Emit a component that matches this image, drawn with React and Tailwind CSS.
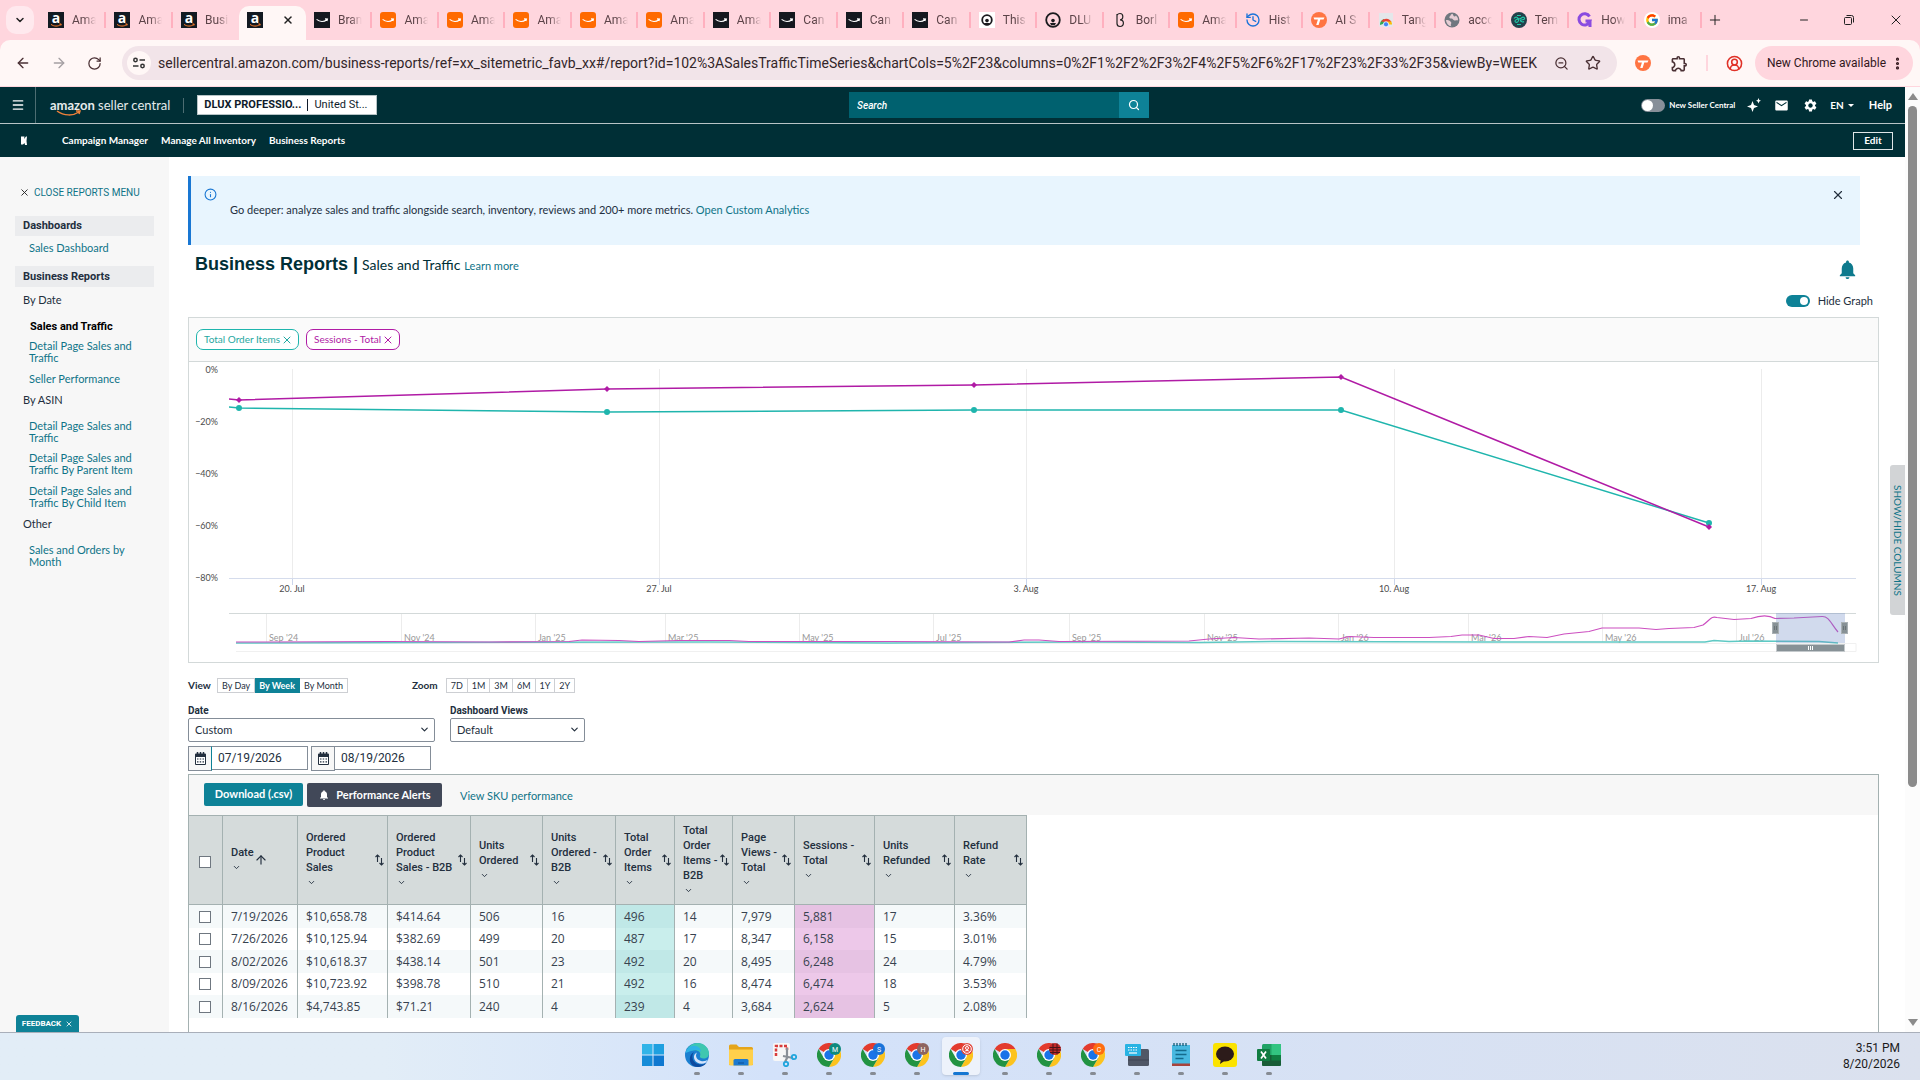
import React from "react";
import {
  ArrowLeft, ArrowRight, RotateCw, Star, X, Plus, Minus, Menu, ChevronDown, Info,
  ZoomOut, CircleUserRound, MoreVertical, Search, ArrowUp, History,
} from "lucide-react";
import { FcGoogle } from "react-icons/fc";
import { MdNotifications, MdSettings, MdMail, MdOutlineExtension } from "react-icons/md";

const BODY = "font-['Lato','Liberation_Sans',sans-serif]";
const UI = "font-['Roboto','Liberation_Sans',sans-serif]";

/* ---------- favicons ---------- */

function AmazonA() {
  return (
    <svg viewBox="0 0 16 16" className="size-4 shrink-0">
      <rect width="16" height="16" fill="#131a22" />
      <text x="8" y="11" textAnchor="middle" fontSize="14" fontWeight="700" fill="#fff" fontFamily="Open Sans, sans-serif">a</text>
      <path d="M3 12.4c3 2.2 7 2.2 9.6.2M11.4 12h1.8l-.4 1.6" fill="none" stroke="#ff7f2a" strokeWidth="1" />
    </svg>
  );
}
function Smile({ bg, r }) {
  return (
    <svg viewBox="0 0 16 16" className="size-4 shrink-0">
      <rect width="16" height="16" rx={r} fill={bg} />
      <path d="M2.6 7.4c3.2 2.6 7.4 2.7 10.2.3M11 6.9l2.4.1-.5 2" fill="none" stroke="#fff" strokeWidth="1.2" />
    </svg>
  );
}
function Ring({ box }) {
  return (
    <svg viewBox="0 0 16 16" className="size-4 shrink-0">
      {box && <rect width="16" height="16" fill="#fff" />}
      <circle cx="8" cy="8" r={box ? 4.8 : 6.8} fill="none" stroke="#1b1b1f" strokeWidth="1.8" />
      <path d="M5 11h6l-1.2 2.2H6.2z" fill="#1b1b1f" />
      <circle cx="8" cy="8.600" r="1.800" fill="#1b1b1f" />
    </svg>
  );
}
function BMark() {
  return (
    <svg viewBox="0 0 16 16" className="size-4 shrink-0" fill="none" stroke="#222" strokeWidth="1.2">
      <path d="M5 2v9.5c0 2 1.3 3 3 3s3.4-1.2 3.4-3.4S10 7.8 8 7.800M5 3.2C5.8 2 6.8 1.5 8 1.5c1.6 0 2.8 1 2.8 3S9.6 7.8 8 7.8" />
    </svg>
  );
}
function TMark() {
  return (
    <svg viewBox="0 0 16 16" className="size-4 shrink-0">
      <circle cx="8" cy="8" r="8" fill="#ff7442" />
      <path d="M2.5 5.5h11l-1 2H9.3L7.6 13H5.2l1.7-5.5H3.3z" fill="#fff" />
    </svg>
  );
}
function StoreMark() {
  return (
    <svg viewBox="0 0 16 16" className="size-4 shrink-0">
      <path d="M1 1h14v12.5a1.5 1.5 0 0 1-1.5 1.5h-11A1.5 1.5 0 0 1 1 13.500z" fill="#e4e7ea" />
      <path d="M2 13a6 6 0 0 1 4-6l2 4z" fill="#34a853" />
      <path d="M3 9.5a6 6 0 0 1 10.5.5H8z" fill="#ea4335" />
      <path d="M14 12.5a6 6 0 0 0-.8-3H9l1 3z" fill="#fbbc05" />
      <circle cx="8" cy="12.3" r="2.6" fill="#4285f4" stroke="#fff" strokeWidth=".8" />
    </svg>
  );
}
function GlobeMark() {
  return (
    <svg viewBox="0 0 16 16" className="size-4 shrink-0">
      <circle cx="8" cy="8" r="7.500" fill="#70777f" />
      <path d="M8.500 1.800c-2 .2-1.500 1.800-2.800 2.600C4.500 5.200 6 6.500 7.500 6.500S9 8.200 10.500 8.500s2.500-.5 3.500 0a6 6 0 0 0-2-5C11 5 10 4.500 9.500 3.800zM2 8c1.500 0 3.500.3 4.500 1.500S7.500 11 7 12s-.2 1.500.5 2.200A6.300 6.300 0 0 1 2 8z" fill="#e6cdd4" />
    </svg>
  );
}
function TealMark() {
  return (
    <svg viewBox="0 0 16 16" className="size-4 shrink-0">
      <circle cx="8" cy="8" r="8" fill="#23404b" />
      <path d="M3 6.5c2-2.5 4-1 4.5 1S6 11 4.5 10 5 7 8 7s3-3 5-1.5-1 2.5-3 2.5 1 3 3 1.5M6 12.500h4M6 3.500h4" fill="none" stroke="#1fc9a8" strokeWidth="1.1" />
    </svg>
  );
}
function GPurple() {
  return (
    <svg viewBox="0 0 16 16" className="size-4 shrink-0">
      <path d="M12.5 4.6A5.6 5.6 0 1 0 13 9H8.500M13 8.800V15" fill="none" stroke="#8a4be0" strokeWidth="3" />
    </svg>
  );
}
function GoogleMark() {
  return <span className="flex size-4 shrink-0 items-center justify-center rounded-full bg-white"><FcGoogle className="size-[14px]" /></span>;
}

const black = <Smile bg="#15181f" r={0} />;
const orange = <Smile bg="#ff6a00" r={3} />;
const TABS = [
  [<AmazonA />, "Ama"], [<AmazonA />, "Ama"], [<AmazonA />, "Busi"], [<AmazonA />, null],
  [black, "Bran"], [orange, "Ama"], [orange, "Ama"], [orange, "Ama"], [orange, "Ama"], [orange, "Ama"],
  [black, "Ama"], [black, "Can"], [black, "Can"], [black, "Can"], [<Ring box />, "This"], [<Ring />, "DLU"],
  [<BMark />, "Borl"], [orange, "Ama"], [<History className="size-4 shrink-0 text-[#1a73d9]" />, "Hist"],
  [<TMark />, "AI S"], [<StoreMark />, "Tang"], [<GlobeMark />, "acco"], [<TealMark />, "Tem"],
  [<GPurple />, "How"], [<GoogleMark />, "ima"],
];

/* ---------- browser chrome ---------- */

function TabStrip() {
  return (
    <div className="flex h-10 shrink-0 bg-[#ffd6de]">
      <div className="flex w-10 shrink-0 items-center pl-[6px]">
        <button aria-label="Search tabs" className="flex h-7 w-7 items-center justify-center rounded-[10px] bg-[#ffe9ee] text-[#222]">
          <ChevronDown className="size-3" strokeWidth={3} />
        </button>
      </div>
      <div className="flex min-w-0 flex-1">
        {TABS.map(([icon, label], i) =>
          label === null ? (
            <div key={i} className="mt-[6px] flex min-w-0 shrink grow basis-16 items-center justify-between rounded-t-[10px] bg-[#fff7f6] pr-3 pb-[6px] pl-2">
              {icon}
              <button aria-label="Close tab"><X className="size-3 text-[#222]" strokeWidth={3} /></button>
            </div>
          ) : (
            <div key={i} className="flex min-w-0 shrink grow basis-16 items-center pl-2">
              {icon}
              <span className={`${UI} ml-2 text-xs whitespace-nowrap text-[#5c4348] [mask-image:linear-gradient(to_right,#000_12px,transparent_24px)]`}>{label}</span>
              <span className={i === 2 ? "hidden" : "ml-auto h-4 w-[2px] shrink-0 bg-[#ffb0bf]"} />
            </div>
          )
        )}
      </div>
      <div className="flex w-[218px] shrink-0 items-center justify-between pr-4 pl-[5px] text-[#222]">
        <button aria-label="New tab"><Plus className="size-4" strokeWidth={1.5} /></button>
        <div className="flex items-center gap-[33px]">
          <button aria-label="Minimize"><Minus className="size-3" strokeWidth={2} /></button>
          <button aria-label="Restore">
            <svg viewBox="0 0 12 12" className="size-3" fill="none" stroke="currentColor">
              <rect x="1.5" y="3.5" width="7" height="7" rx="1" /><path d="M3.5 1.5h5a2 2 0 0 1 2 2v5" />
            </svg>
          </button>
          <button aria-label="Close"><X className="size-4" strokeWidth={1.5} /></button>
        </div>
      </div>
    </div>
  );
}

function Toolbar() {
  return (
    <div className="bg-[#ffd6de]">
      <div className={`${UI} flex h-[46px] items-center rounded-t-[10px] bg-[#fff7f6] pr-[7px] pl-[15px] text-[#4a3034]`}>
        <button aria-label="Back"><ArrowLeft className="size-4" /></button>
        <button aria-label="Forward" className="ml-5 text-[#a5a0a3]"><ArrowRight className="size-4" /></button>
        <button aria-label="Reload" className="ml-5"><RotateCw className="size-[15px]" /></button>
        <div className="ml-5 flex h-[34px] min-w-0 flex-1 items-center rounded-full bg-[#f2e4e9] pr-4 pl-[5px]">
          <span className="flex size-6 shrink-0 items-center justify-center rounded-full bg-[#fff7f6]">
            <svg viewBox="0 0 14 14" className="size-[14px]" fill="none" stroke="#333" strokeWidth="1.5">
              <circle cx="3.5" cy="4" r="1.7" /><path d="M7.5 4h5.5M1 10h5.5" /><circle cx="10.5" cy="10" r="1.7" />
            </svg>
          </span>
          <input
            aria-label="Address"
            readOnly
            className="ml-[7px] min-w-0 flex-1 bg-transparent text-sm text-[#33262a] outline-none"
            value="sellercentral.amazon.com/business-reports/ref=xx_sitemetric_favb_xx#/report?id=102%3ASalesTrafficTimeSeries&chartCols=5%2F23&columns=0%2F1%2F2%2F3%2F4%2F5%2F6%2F17%2F23%2F33%2F35&viewBy=WEEK"
          />
          <button aria-label="Zoom"><ZoomOut className="size-[15px]" /></button>
          <button aria-label="Bookmark" className="ml-4"><Star className="size-4" /></button>
        </div>
        <span className="ml-[18px]"><TMark /></span>
        <button aria-label="Extensions" className="ml-[19px]"><MdOutlineExtension className="size-[19px]" /></button>
        <span className="ml-[17px] h-4 w-[2px] bg-[#ffd6de]" />
        <button aria-label="Profile" className="ml-[18px] text-[#e03127]"><CircleUserRound className="size-[17px]" strokeWidth={2.2} /></button>
        <button className="ml-[12px] flex h-[34px] items-center rounded-full bg-[#ffd6de] pr-2 pl-3 text-xs text-[#33161c]">
          New Chrome available
          <MoreVertical className="ml-1 size-[15px]" strokeWidth={3} />
        </button>
      </div>
      <div className="h-px bg-[#ffd6de]" />
    </div>
  );
}

/* ---------- seller central header ---------- */

function Header() {
  return (
    <header className={`${BODY} shrink-0 bg-[#002f36] text-white`}>
      <div className="flex h-9 items-center">
        <div className="flex min-w-0 flex-8 items-center self-stretch">
          <button aria-label="Menu" className="flex w-9 items-center self-stretch border-r border-[#4d6d72] pl-[11px]">
            <Menu className="size-[14px]" strokeWidth={2.4} />
          </button>
          <a href="#home" className="relative ml-[14px] text-[13px] leading-4 whitespace-nowrap text-[#e5ebec]">
            <b>amazon</b> seller central
            <svg viewBox="0 0 26 6" className="absolute top-[13px] left-[6px] h-[6px] w-[26px]" fill="none" stroke="#f0813a" strokeWidth="1.5">
              <path d="M1 1c7 5 16 5 22 1M20 1l4 0-1 3" />
            </svg>
          </a>
          <span className="mx-[13px] h-[15px] w-px bg-[#4d6d72]" />
          <button className={`${UI} flex h-5 w-[180px] items-center border border-[#b7c4c6] bg-white px-[6px] text-[11px] text-[#0f1b2b]`}>
            <b>DLUX PROFESSIO...</b>
            <span className="mx-[6px] h-3 w-px bg-[#0f1b2b]" />
            <span>United St...</span>
          </button>
        </div>
        <form className="flex h-[26px] w-[300px] shrink-0">
          <input aria-label="Search" placeholder="Search" className={`${UI} min-w-0 flex-1 bg-[#00616f] px-2 text-[10px] font-medium italic placeholder:text-white`} />
          <button type="button" aria-label="Go" className="flex w-[30px] items-center justify-center bg-[#0e8297]"><Search className="size-3" strokeWidth={2.4} /></button>
        </form>
        <div className="flex min-w-0 flex-7 items-center justify-end pr-[13px] font-bold">
          <label className="flex items-center gap-1 text-[8px] whitespace-nowrap">
            <input type="checkbox" role="switch" className="h-[13px] w-6 appearance-none rounded-full bg-[#878f99] before:block before:size-[11px] before:translate-y-px before:translate-x-px before:rounded-full before:bg-white" />
            New Seller Central
          </label>
          <svg viewBox="0 0 14 14" className="ml-3 size-[14px]" fill="#fff">
            <path d="M5.5 3l1.5 4 4 1.5-4 1.5-1.5 4L4 10 0 8.500 4 7z" /><path d="M11.500 0l.8 2 1.7.8-1.7.8-.8 2-.8-2L9 2.8l1.7-.8z" />
          </svg>
          <MdMail className="ml-[13px] size-[15px]" />
          <MdSettings className="ml-[14px] size-[15px]" />
          <button className="ml-3 flex items-center text-[10px]">EN<span className="ml-1 border-x-[3px] border-t-[3px] border-x-transparent border-t-white" /></button>
          <a href="#help" className="ml-[15px] text-[11px]">Help</a>
        </div>
      </div>
      <div className="h-px bg-[#b7c4c6]" />
      <nav className="flex h-[33px] items-center pr-[12px] pl-5 text-[10px] font-bold">
        <svg viewBox="0 0 8 9" className="mb-px h-[9px] w-2" fill="#fff"><path d="M1 .5h3.500L4 3l2-2.500h1L6.500 5 7 9H5L4.500 7 3 8.500H1z" /></svg>
        <a href="#campaign" className="ml-[34px]">Campaign Manager</a>
        <a href="#inventory" className="ml-[13px]">Manage All Inventory</a>
        <a href="#reports" className="ml-[13px]">Business Reports</a>
        <button className="ml-auto h-[18px] w-10 border border-[#dfe6e7]">Edit</button>
      </nav>
    </header>
  );
}

/* ---------- sidebar ---------- */

const SIDE = [
  ["band", "Dashboards", "mt-[16px] h-5"],
  ["link", "Sales Dashboard", "mt-[6px]"],
  ["band", "Business Reports", "mt-3 h-[21px]"],
  ["group", "By Date", "mt-[7px]"],
  ["active", "Sales and Traffic", "mt-[15px]"],
  ["link", "Detail Page Sales and Traffic", "mt-[7px]"],
  ["link", "Seller Performance", "mt-[9px]"],
  ["group", "By ASIN", "mt-[9px]"],
  ["link", "Detail Page Sales and Traffic", "mt-[14px]"],
  ["link", "Detail Page Sales and Traffic By Parent Item", "mt-2"],
  ["link", "Detail Page Sales and Traffic By Child Item", "mt-[9px]"],
  ["group", "Other", "mt-[9px]"],
  ["link", "Sales and Orders by Month", "mt-[14px]"],
];
const SIDE_STYLE = {
  band: "flex items-center bg-[#ebecee] pl-2 font-['Roboto'] font-bold text-[#232f3e]",
  link: "mr-3 ml-[14px] block text-[#0f7488]",
  active: "mr-3 ml-[15px] block font-['Roboto'] font-bold text-black",
  group: "ml-2 text-[#232f3e]",
};

function Sidebar() {
  return (
    <aside className={`${BODY} relative w-[169px] shrink-0 bg-[#f7f7f7] px-[15px] pt-[28px] text-[11px] leading-3`}>
      <button className={`${UI} flex h-[15px] items-center gap-1 pl-[4px] text-[10px] whitespace-nowrap text-[#0f7488]`}>
        <X className="size-[11px] text-[#222]" strokeWidth={2} />
        CLOSE REPORTS MENU
      </button>
      {SIDE.map(([kind, label, gap], i) =>
        kind === "link" || kind === "active" ? (
          <a key={i} href="#report" className={`${SIDE_STYLE[kind]} ${gap}`}>{label}</a>
        ) : (
          <div key={i} className={`${SIDE_STYLE[kind]} ${gap}`}>{label}</div>
        )
      )}
      <button className={`${UI} absolute bottom-0 left-4 flex h-[17px] w-[63px] items-center justify-center gap-1 rounded-t-[3px] bg-[#0e8297] text-[8px] font-bold whitespace-nowrap text-white`}>
        FEEDBACK <X className="size-2" strokeWidth={2.4} />
      </button>
    </aside>
  );
}

/* ---------- chart ---------- */

const PX = [50, 418, 785, 1152, 1520];
const MAG = [38, 27, 23, 15, 165];
const TEAL = [46, 50, 48, 48, 161];
const WEEKS = [[103, "20. Jul"], [470, "27. Jul"], [837, "3. Aug"], [1205, "10. Aug"], [1572, "17. Aug"]];
const MONTHS = [[77, "Sep '24"], [212, "Nov '24"], [346, "Jan '25"], [476, "Mar '25"], [610, "May '25"], [744, "Jul '25"], [880, "Sep '25"], [1015, "Nov '25"], [1149, "Jan '26"], [1279, "Mar '26"], [1413, "May '26"], [1547, "Jul '26"]];

function Chart() {
  const pts = (ys) => ys.map((y, i) => `${PX[i]},${y}`).join(" ");
  return (
    <svg viewBox="0 0 1689 300" className="block h-auto w-full" fontFamily="Lato, sans-serif" fontSize="9">
      {[0, 20, 40, 60, 80].map((v) => (
        <text key={v} x="29" y={11 + v * 2.6} textAnchor="end" fill="#4c4c4c">{v ? `−${v}%` : "0%"}</text>
      ))}
      {WEEKS.map(([x, t]) => (
        <g key={t}>
          <path d={`M${x + 0.5} 7V216`} stroke="#ececec" />
          <path d={`M${x + 0.5} 216V223`} stroke="#ccd6eb" />
          <text x={x} y="230" textAnchor="middle" fill="#4c4c4c">{t}</text>
        </g>
      ))}
      <path d="M40 216.5H1667" stroke="#d5dcec" />
      <polyline points={`40,45 ${pts(TEAL)}`} fill="none" stroke="#1fb5ad" strokeWidth="1.5" />
      <polyline points={`40,37 ${pts(MAG)}`} fill="none" stroke="#b01ba5" strokeWidth="1.5" />
      {PX.map((x, i) => <circle key={x} cx={x} cy={TEAL[i]} r="3" fill="#1fb5ad" />)}
      {PX.map((x, i) => <path key={x} d={`M${x} ${MAG[i] - 3}l3 3-3 3-3-3z`} fill="#b01ba5" />)}

      <path d="M40 251.5H1667" stroke="#d3d9d9" />
      {MONTHS.map(([x, t]) => (
        <g key={t}>
          <path d={`M${x + 0.5} 252V280`} stroke="#ececec" />
          <text x={x + 3} y="279" fill="#999">{t}</text>
        </g>
      ))}
      <path d="M47 281.5H1667V289.5H47" fill="none" stroke="#f0f0f0" />
      <path d="M47 281C200 280 400 281 520 280L700 281 900 280 1010 280.5 1090 279.5 1300 280 1420 280 1516 280 1525 278.5 1540 279.5 1560 279 1630 279.5 1649 281" fill="none" stroke="#5fc9c4" strokeWidth="1.5" />
      <path d="M47 280H76L200 279.5 300 280 380 279.5 393 278 430 278.5 450 279.5 490 278.5 540 278.5 560 279.5 700 279.5 820 280 835 278 850 278 870 279.5 1000 279 1020 277 1045 275.5 1070 277 1120 276 1150 277 1160 274.5 1185 275.5 1240 275.5 1262 274.5 1273 273 1290 273 1305 276.5 1325 276.5 1340 274.5 1358 275.5 1375 272 1400 269.5 1413 266 1450 266 1467 267.5 1480 266.5 1505 265.5 1514 263C1522 257 1522 254 1528 255.5L1545 257.5 1562 256.5C1572 253 1580 253 1586 256.5L1605 256 1633 254.5C1640 254 1642 262 1649 270" fill="none" stroke="#cc4fc0" strokeWidth="1.2" />
      <rect x="1587" y="251" width="69" height="30" fill="#6685c2" fillOpacity=".3" />
      <rect x="1587.5" y="282.5" width="68" height="7" fill="#879196" stroke="#c4c9cc" />
      <path d="M1619.5 284v4M1621.5 284v4M1623.5 284v4" stroke="#fff" />
      {[1583, 1652].map((x) => (
        <g key={x}>
          <rect x={x + 0.5} y="260.5" width="6" height="11" fill="#879196" stroke="#a9b0b4" />
          <path d={`M${x + 2.5} 264v4M${x + 4.5} 264v4`} stroke="#6a7276" />
        </g>
      ))}
    </svg>
  );
}

function Chip({ label, cls }) {
  return (
    <button className={`flex h-[21px] items-center rounded-[7px] border bg-white pr-[5px] pl-[7px] text-[10px] ${cls}`}>
      {label}<X className="ml-px size-3" strokeWidth={2} />
    </button>
  );
}

/* ---------- controls ---------- */

function Segmented({ items, active, pad }) {
  return (
    <div className="flex h-[15px] text-[9px] text-[#232f3e]">
      {items.map((t, i) => (
        <button key={t} className={`${pad} border-y border-r leading-3 whitespace-nowrap first:border-l ${i === active ? "border-[#0e8297] bg-[#0e8297] font-bold text-white" : "border-[#cdcfd3] bg-white"}`}>{t}</button>
      ))}
    </div>
  );
}

function Select({ label, value, width }) {
  return (
    <div className={width}>
      <label className="block font-['Roboto'] text-[10px] leading-[15px] font-bold text-[#232f3e]" htmlFor={label}>{label}</label>
      <div className="relative">
        <select id={label} className="h-6 w-full appearance-none rounded-[2px] border border-[#848d98] bg-white px-[6px] text-[11px] text-[#232f3e]">
          <option>{value}</option>
        </select>
        <ChevronDown className="pointer-events-none absolute top-[6px] right-[5px] size-[11px] text-[#232f3e]" strokeWidth={2.6} />
      </div>
    </div>
  );
}

function DateBox({ label, value, iconBorder }) {
  return (
    <div className="flex items-start">
      <span className={`flex h-[25px] w-6 items-center justify-center border bg-[#f7f7f7] ${iconBorder}`}>
        <svg viewBox="0 0 13 13" className="size-[13px]">
          <path d="M1 2.5a1 1 0 0 1 1-1h9a1 1 0 0 1 1 1V12a1 1 0 0 1-1 1H2a1 1 0 0 1-1-1z" fill="#232f3e" />
          <path d="M3.5 0v3M6.5 0v3M9.5 0v3" stroke="#232f3e" strokeWidth="1.5" />
          <path d="M2 5h9v7H2z" fill="#fff" />
          <path d="M3 7h1.500M5.700 7h1.500M8.500 7H10M3 9.800h1.500M5.700 9.800h1.500M8.500 9.800H10" stroke="#232f3e" strokeWidth="1.200" />
        </svg>
      </span>
      <input aria-label={label} defaultValue={value} className={`${UI} h-6 w-24 border border-l-0 border-[#848d98] bg-white px-[6px] text-xs text-[#232f3e]`} />
    </div>
  );
}

/* ---------- table ---------- */

const COLS = [
  ["Ordered\nProduct\nSales", "w-[90px]"], ["Ordered\nProduct\nSales - B2B", "w-[83px]"], ["Units\nOrdered", "w-[72px]"],
  ["Units\nOrdered -\nB2B", "w-[73px]"], ["Total\nOrder\nItems", "w-[59px]"], ["Total\nOrder\nItems -\nB2B", "w-[58px]"],
  ["Page\nViews -\nTotal", "w-[62px]"], ["Sessions -\nTotal", "w-20"], ["Units\nRefunded", "w-20"], ["Refund\nRate", "w-[72px]"],
];
const ROWS = [
  ["7/19/2026", "$10,658.78", "$414.64", "506", "16", "496", "14", "7,979", "5,881", "17", "3.36%"],
  ["7/26/2026", "$10,125.94", "$382.69", "499", "20", "487", "17", "8,347", "6,158", "15", "3.01%"],
  ["8/02/2026", "$10,618.37", "$438.14", "501", "23", "492", "20", "8,495", "6,248", "24", "4.79%"],
  ["8/09/2026", "$10,723.92", "$398.78", "510", "21", "492", "16", "8,474", "6,474", "18", "3.53%"],
  ["8/16/2026", "$4,743.85", "$71.21", "240", "4", "239", "4", "3,684", "2,624", "5", "2.08%"],
];

function SortIcon() {
  return (
    <svg viewBox="0 0 9 12" className="mr-[3px] h-3 w-[9px] shrink-0" fill="none" stroke="#232f3e" strokeWidth="1.1">
      <path d="M2.5 8V1M.5 3l2-2 2 2M6.5 4v7M4.5 9l2 2 2-2" />
    </svg>
  );
}
function Tick({ label }) {
  return <input type="checkbox" aria-label={label} className="block size-3 appearance-none border border-[#6f7780] bg-white" />;
}
function cellTone(c, r) {
  if (c === 5) return r % 2 ? "bg-[#c9eeec]" : "bg-[#c0e8e7]";
  if (c === 8) return r % 2 ? "bg-[#edc8e9]" : "bg-[#e6c2e3]";
  return "";
}

function ReportTable() {
  const line = "border-r border-[#a4b1b1]";
  return (
    <table className="w-[837px] table-fixed border-separate border-spacing-0 text-left">
      <thead className={`${UI} text-[11px] leading-[15px] text-[#232f3e]`}>
        <tr className="h-[90px] bg-[#d5dbdb] *:border-y *:border-y-[#a4b1b1] *:p-0">
          <th className={`w-[34px] ${line}`}><div className="pt-1 pl-[10px]"><Tick label="Select all" /></div></th>
          <th className={`w-[75px] ${line}`}>
            <div className="flex items-center pl-2 font-medium">
              <div>Date<ChevronDown className="my-[3px] ml-px size-[9px]" strokeWidth={2.4} /></div>
              <ArrowUp className="size-[14px]" strokeWidth={2} />
            </div>
          </th>
          {COLS.map(([t, w]) => (
            <th key={t} className={`${w} ${line}`}>
              <div className="flex items-center justify-between pl-2 font-medium">
                <div className="whitespace-pre">{t}<ChevronDown className="my-[3px] ml-px size-[9px]" strokeWidth={2.4} /></div>
                <SortIcon />
              </div>
            </th>
          ))}
        </tr>
      </thead>
      <tbody className="font-['Open_Sans','Noto_Sans',sans-serif] text-xs leading-4 text-[#37424f]">
        {ROWS.map((row, r) => (
          <tr key={r} className={r % 2 ? "h-[22px] bg-white" : "h-[23px] bg-[#f5f9fa]"}>
            <td className={`p-0 ${line}`}><div className="pl-[10px]"><Tick label={row[0]} /></div></td>
            {row.map((v, c) => <td key={c} className={`py-0 pr-0 pl-2 ${line} ${cellTone(c, r)}`}>{v}</td>)}
          </tr>
        ))}
      </tbody>
    </table>
  );
}

/* ---------- main ---------- */

function Main() {
  return (
    <main className={`${BODY} relative flex min-w-0 flex-1 flex-col overflow-hidden bg-white pt-[19px] pr-[26px] pl-[19px] text-[11px] text-[#232f3e]`}>
      <div className="mr-[19px] flex h-[69px] shrink-0 border-l-[3px] border-[#1977d3] bg-[#e8f5fe]">
        <Info className="mt-3 ml-[13px] size-[13px] text-[#1977d3]" strokeWidth={2} />
        <p className="mt-7 ml-[13px] leading-3">
          Go deeper: analyze sales and traffic alongside search, inventory, reviews and 200+ more metrics. <a href="#analytics" className="text-[#0f7488]">Open Custom Analytics</a>
        </p>
        <button aria-label="Dismiss" className="mt-[12px] mr-[15px] ml-auto self-start"><X className="size-[14px]" strokeWidth={2} /></button>
      </div>

      <div className="flex h-[42px] shrink-0 items-start justify-between pr-5 pl-[7px]">
        <h1 className="mt-2 font-['Liberation_Sans',sans-serif] text-lg leading-[22px] font-bold text-[#002f36]">
          Business Reports | <span className="-ml-px font-['Lato'] text-sm font-normal">Sales and Traffic</span> <a href="#learn" className="-ml-px font-['Lato'] text-[11px] font-normal text-[#0f7488]">Learn more</a>
        </h1>
        <button aria-label="Alerts" className="mt-[13px] text-[#0e7a8d]"><MdNotifications className="size-[23px]" /></button>
      </div>

      <label className="mt-[7px] mr-[6px] flex h-[14px] shrink-0 items-center gap-2 self-end text-[11px]">
        <input type="checkbox" role="switch" defaultChecked className="h-3 w-6 appearance-none rounded-full bg-[#0e8297] before:ml-[14px] before:block before:size-2 before:translate-y-[2px] before:rounded-full before:bg-white" />
        Hide Graph
      </label>

      <section className="mt-[9px] shrink-0 border border-[#d3d9d9]">
        <div className="flex h-[44px] items-center gap-[7px] border-b border-[#d3d9d9] bg-[#fafafa] px-[7px]">
          <Chip label="Total Order Items" cls="border-[#1fb5ad] text-[#1fa8a1]" />
          <Chip label="Sessions - Total" cls="border-[#b01ba5] text-[#b01ba5]" />
        </div>
        <Chart />
      </section>

      <div className="mt-[15px] flex shrink-0 items-center">
        <b className="w-[29px] text-[10px]">View</b>
        <Segmented items={["By Day", "By Week", "By Month"]} active={1} pad="px-1" />
        <b className="mr-2 ml-[64px] text-[10px]">Zoom</b>
        <Segmented items={["7D", "1M", "3M", "6M", "1Y", "2Y"]} pad="px-1" />
      </div>
      <div className="mt-[10px] flex shrink-0 gap-[15px]">
        <Select label="Date" value="Custom" width="w-[247px]" />
        <Select label="Dashboard Views" value="Default" width="w-[135px]" />
      </div>
      <div className="mt-1 flex shrink-0 gap-[3px]">
        <DateBox label="Start date" value="07/19/2026" iconBorder="border-[#848d98] border-r-[#0e8297]" />
        <DateBox label="End date" value="08/19/2026" iconBorder="border-[#848d98]" />
      </div>

      <section className="mt-[3px] flex min-h-0 flex-1 flex-col border border-b-0 border-[#a4b1b1]">
        <div className="flex h-10 shrink-0 items-start bg-[#f7f7f7] pt-2 pl-[15px] font-bold text-white">
          <button className="h-[23px] w-[99px] rounded-[2px] bg-[#0e8297]">Download (.csv)</button>
          <button className="ml-1 flex h-6 w-[135px] items-center justify-center gap-[6px] rounded-[2px] bg-[#414858]">
            <MdNotifications className="size-3" />Performance Alerts
          </button>
          <a href="#sku" className="mt-[6px] ml-[18px] leading-[14px] font-normal text-[#0f7488]">View SKU performance</a>
        </div>
        <ReportTable />
      </section>

      <button className="absolute top-[308px] right-0 flex h-[150px] w-[15px] items-center justify-center rounded-l-[3px] bg-[#d2d4d6] text-[10px] text-[#0f7488] [writing-mode:vertical-rl]">SHOW/HIDE COLUMNS</button>
    </main>
  );
}

/* ---------- taskbar ---------- */

function ChromeIcon({ badge, letter }) {
  return (
    <svg viewBox="0 0 24 24" className="size-6">
      <path d="M12 12 1.6 6A12 12 0 0 1 22.4 6z" fill="#e33b2e" />
      <path d="M12 6h10.4A12 12 0 0 1 12 24l5.2-9z" fill="#fcc31e" />
      <path d="M17.2 15 12 24A12 12 0 0 1 1.6 6l5.2 9z" fill="#229342" />
      <circle cx="12" cy="12" r="6" fill="#fff" />
      <circle cx="12" cy="12" r="4.7" fill="#1a73e8" />
      {badge && <circle cx="18" cy="6" r="6" fill={badge} />}
      {letter && <text x="18" y="8.5" fontSize="7" textAnchor="middle" fill="#fff" fontFamily="Roboto, sans-serif">{letter}</text>}
      {badge === "#e34a3f" && <g fill="none" stroke="#fff" strokeWidth="1"><circle cx="18" cy="6" r="4.3" /><circle cx="18" cy="5" r="1.5" /><path d="M15.5 8.8c1-1.8 4-1.8 5 0" /></g>}
      {badge === "#c22a2a" && <path d="M12.5 4.500h11M12 7h12M13 9.500h10M16 .5v11M20 .5v11" stroke="#4a1518" strokeWidth="1" />}
    </svg>
  );
}
const svg = (children) => <svg viewBox="0 0 24 24" className="size-6">{children}</svg>;
const APPS = [
  ["Start", svg(<g><path d="M1 1h10.5v10.5H1z" fill="#31b4e8" /><path d="M12.5 1H23v10.5H12.500z" fill="#1fa0e0" /><path d="M1 12.5h10.5V23H1z" fill="#168cd8" /><path d="M12.5 12.5H23V23H12.500z" fill="#0f78d0" /></g>)],
  ["Edge", svg(<g><circle cx="12" cy="12" r="12" fill="#1b7fd0" /><path d="M1 9C3 3 8 0 12.5 0 19 0 24 5 24 10.5c0 3-2.5 5-5.5 5-2.5 0-4-1-3.5-2.2 1.5-4-2-6-5-6C6 7.3 2 9 1 9z" fill="#3fc7b0" /><path d="M.5 10C2 4 7 2 11 3c3 .8 5 3 5 6-1.5-2-4-2.5-6-2-5 1-8 2.5-9.5 3z" fill="#2fb2e6" /><path d="M9 9c-3 4-2 11 6 12.5 2.5.3 5-.5 6.5-1.5-3 4-9 5-13 3C3 20 4 11 9 9z" fill="#0c4aa0" /><path d="M12 9.5c-2 3-1 7 4 8.5 3 .8 6-.5 7-1.5l-2 3c-4 2.5-10 1-11.5-3S10 10.5 12 9.5z" fill="#d6e3fb" /></g>)],
  ["Explorer", svg(<g><path d="M0 3a1.5 1.5 0 0 1 1.5-1.5h6L10 4h12.5A1.5 1.5 0 0 1 24 5.5V22H0z" fill="#e5a51b" /><path d="M0 6.5h24V21a1.5 1.5 0 0 1-1.5 1.5h-21A1.5 1.5 0 0 1 0 21z" fill="#ffd04b" /><path d="M4.5 22.5v-5A1.5 1.5 0 0 1 6 16h12a1.5 1.5 0 0 1 1.5 1.5v5z" fill="#1d7ad0" /><path d="M9 20h6" stroke="#0d4f94" /></g>)],
  ["Snipping Tool", svg(<g><rect x="0" y="0" width="17" height="18" rx="2" fill="#f7f7f7" /><path d="M3 13V3h11v4" fill="none" stroke="#d83b3b" strokeWidth="2.5" strokeDasharray="3 1.5" /><path d="M14 5v10l-2 4M10 13l10 2" fill="none" stroke="#8a9097" strokeWidth="2.2" /><circle cx="21" cy="14" r="2.2" fill="none" stroke="#1fa5dd" strokeWidth="1.8" /><circle cx="13" cy="21" r="2.2" fill="none" stroke="#1fa5dd" strokeWidth="1.8" /></g>)],
  ["Chrome M", <ChromeIcon badge="#0f8a7e" letter="M" />],
  ["Chrome S", <ChromeIcon badge="#1a73d9" letter="S" />],
  ["Chrome H", <ChromeIcon badge="#8d6460" letter="H" />],
  ["Chrome profile", <ChromeIcon badge="#e34a3f" />],
  ["Chrome", <ChromeIcon />],
  ["Chrome work", <ChromeIcon badge="#c22a2a" />],
  ["Chrome C", <ChromeIcon badge="#ff6d10" letter="C" />],
  ["Keyboard", svg(<g><rect x="3" y="6" width="21" height="17" rx="1.5" fill="#505766" /><path d="M3 17h21" stroke="#3e4452" /><rect x="0" y="1" width="16" height="12" rx="1" fill="#29b3e3" /><path d="M3 4.5h10M3 7h10" stroke="#fff" strokeWidth="1.2" strokeDasharray="1.5 1" /><path d="M4 10h8" stroke="#fff" strokeWidth="1.2" /></g>)],
  ["Notepad", svg(<g><path d="M3 2h18v20H3z" fill="#48b8e0" /><path d="M3 20.5h18V23H3z" fill="#a8433c" /><path d="M5 0v3M8 0v3M11 0v3M14 0v3M17 0v3" stroke="#155a75" strokeWidth="1.3" /><path d="M6.5 7.5h11M6.5 11.5h11M6.5 15.5h8" stroke="#146a8c" strokeWidth="1.5" /></g>)],
  ["Talk", svg(<g><rect width="24" height="24" rx="3" fill="#fbe300" /><ellipse cx="12" cy="11" rx="9" ry="7.5" fill="#2c1b1a" /><path d="M8 16l-1 5 5-3.5z" fill="#2c1b1a" /></g>)],
  ["Excel", svg(<g><rect x="5" y="1" width="19" height="22" rx="1.5" fill="#21a366" /><path d="M5 12h19v9.5a1.5 1.5 0 0 1-1.5 1.5h-16A1.5 1.5 0 0 1 5 21.5z" fill="#185c37" /><path d="M14.5 1H24v11h-9.5z" fill="#33c481" /><path d="M14.5 12H24v5.5h-9.5z" fill="#107c41" /><rect x="0" y="6" width="13" height="12" rx="1" fill="#107c41" /><path d="M4 8.5l5 7M9 8.5l-5 7" stroke="#fff" strokeWidth="1.7" /></g>)],
];

function Taskbar() {
  return (
    <footer className="relative flex h-12 shrink-0 justify-center border-t border-[#a9afba] bg-linear-to-r from-[#e2edf7] from-20% via-[#d3e2fa] via-40% to-[#dbe1ee] pl-[2px]">
      {APPS.map(([name, icon], i) => (
        <button key={name} aria-label={name} className="flex w-11 justify-center pt-1">
          <span className={`flex h-[38px] w-[38px] flex-col items-center justify-between rounded-[4px] pt-[6px] ${name === "Chrome profile" ? "bg-[#edf2fb] shadow-sm" : ""}`}>
            {icon}
            <span className={i === 0 ? "hidden" : name === "Chrome profile" ? "h-[3px] w-4 rounded-full bg-[#1677d2]" : "h-[3px] w-[6px] rounded-full bg-[#868b93]"} />
          </span>
        </button>
      ))}
      <div className="absolute top-[7px] right-5 text-right font-['Roboto','Open_Sans',sans-serif] text-xs leading-4 text-[#1b1b1b]">
        <div>3:51 PM</div>
        <div>8/20/2026</div>
      </div>
    </footer>
  );
}

function PageScrollbar() {
  return (
    <div className="flex w-[15px] shrink-0 flex-col items-center bg-[#fcfcfc] py-[6px]">
      <span className="border-x-[5px] border-b-[7px] border-x-transparent border-b-[#8b8b8b]" />
      <span className="mt-[6px] h-[73%] w-[9px] rounded-full bg-[#8b8b8b]" />
      <span className="mt-auto border-x-[5px] border-t-[7px] border-x-transparent border-t-[#8b8b8b]" />
    </div>
  );
}

export default function App() {
  return (
    <div className="flex h-screen flex-col overflow-hidden bg-white">
      <TabStrip />
      <Toolbar />
      <div className="flex min-h-0 flex-1">
        <div className="flex min-w-0 flex-1 flex-col">
          <Header />
          <div className="flex min-h-0 flex-1">
            <Sidebar />
            <Main />
          </div>
        </div>
        <PageScrollbar />
      </div>
      <Taskbar />
    </div>
  );
}
